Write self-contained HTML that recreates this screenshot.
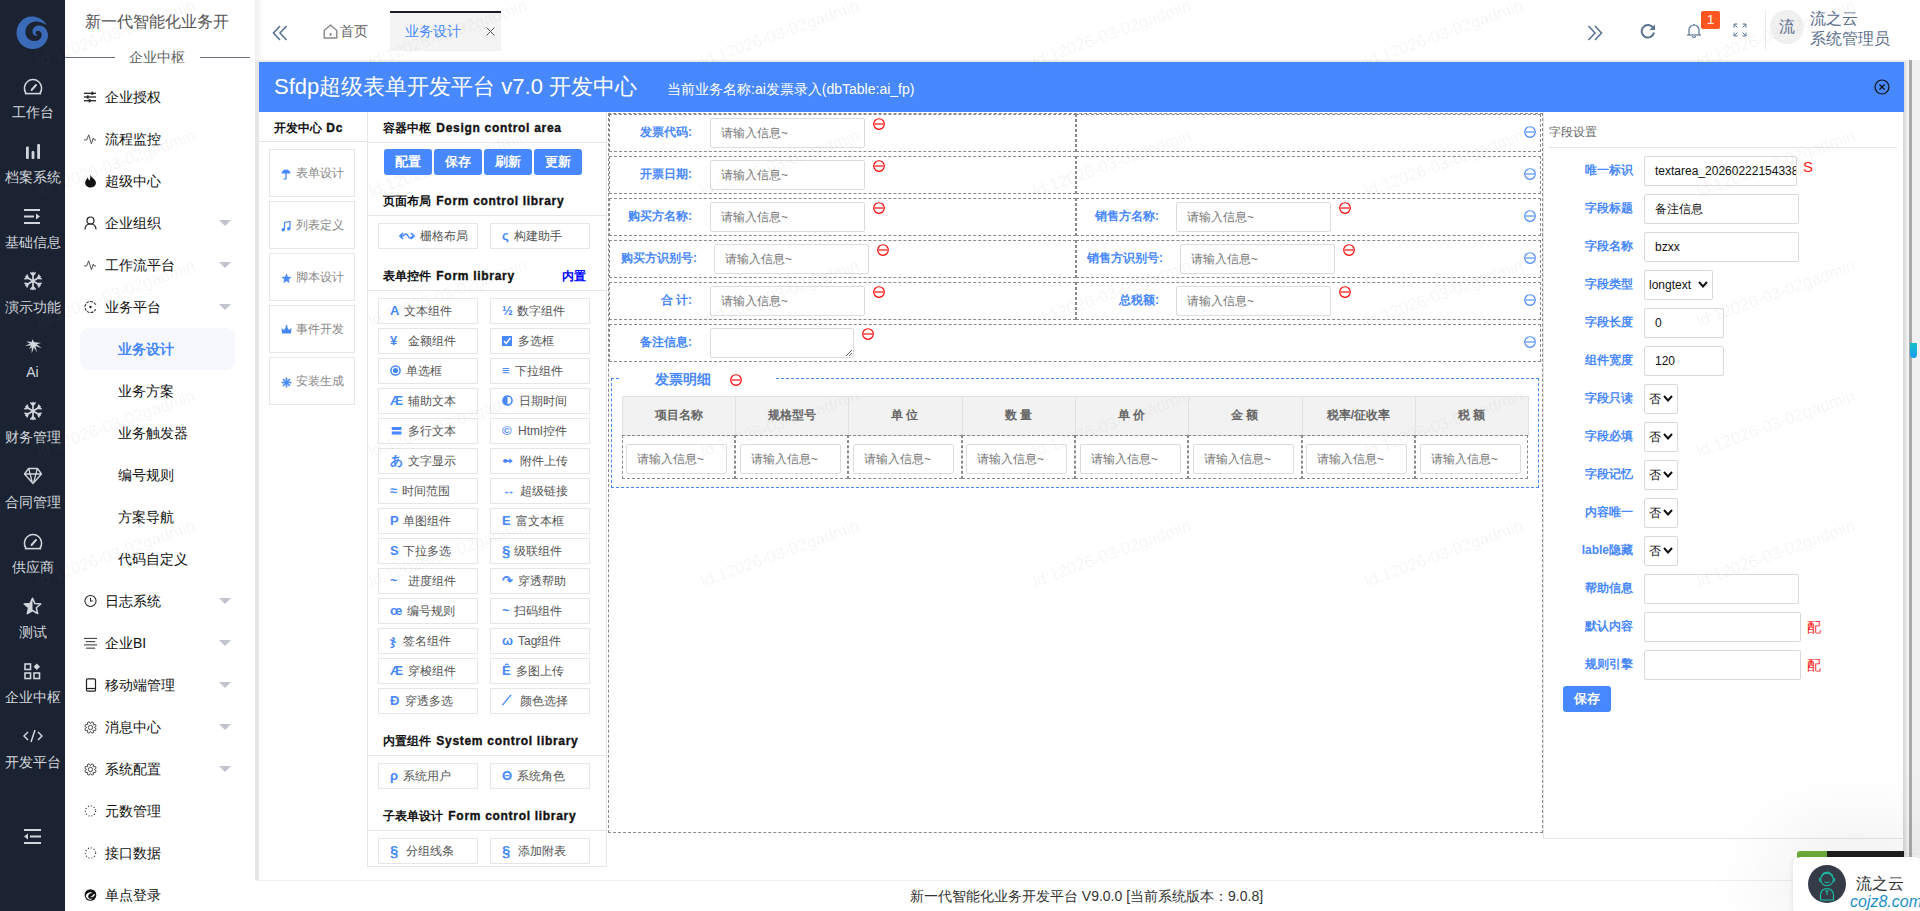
<!DOCTYPE html>
<html><head><meta charset="utf-8">
<style>
*{box-sizing:border-box;margin:0;padding:0}
html,body{width:1920px;height:911px;overflow:hidden;background:#fff;font-family:"Liberation Sans",sans-serif;color:#333;position:relative}
.abs{position:absolute}
#dark{position:absolute;left:0;top:0;width:65px;height:911px;background:#1b2332}
.di{position:absolute;left:0;width:65px;text-align:center;color:#d2d6dc;font-size:14px}
#side{position:absolute;left:65px;top:0;width:190px;height:911px;background:#fff}
.mi{position:absolute;left:0;width:190px;height:42px;line-height:42px;font-size:14px;color:#111;white-space:nowrap}
.mi .ic{position:absolute;left:19px;top:14px;width:13px;height:14px}
.mi .tx{position:absolute;left:40px}
.mi .sub{position:absolute;left:53px}
.mi .arr{position:absolute;left:154px;top:18px;width:0;height:0;border-left:6px solid transparent;border-right:6px solid transparent;border-top:6px solid #c0c4cc}
.wm{font-size:16.7px;line-height:15px;color:rgba(120,120,120,0.075);white-space:nowrap;transform:rotate(-20deg);transform-origin:0 100%}
</style></head><body>
<div id="dark">
<svg class="abs" style="left:16px;top:16px" width="33" height="34" viewBox="0 0 33 34"><path d="M31 9 C27 3 21 0.5 16 0.5 C7 0.5 0.5 8 0.5 17 C0.5 26 8 33 16.5 33 C25 33 32 27 32 19 C32 13 27 9 22.5 9.5 C18.5 10 16 13 16.5 16.5 C17 19.5 20 20.5 22 19 C20 19 19 17.5 19.8 16 C21 14 24.5 14.5 25.5 17.5 C26.5 21.5 23 25.5 18 25 C12 24.5 9 20 9.5 15 C10 9 15 5 21 5.5 C25 6 28.5 7.5 31 9Z" fill="#3a6ab8"/></svg>
<div class="di" style="top:76px;height:20px;display:flex;align-items:center;justify-content:center"><svg width="20" height="17" viewBox="0 0 20 17"><path d="M3 15.2 A8.6 8.6 0 1 1 17 15.2" fill="none" stroke="#d2d6dc" stroke-width="1.5"/><line x1="1.8" y1="15.6" x2="18.2" y2="15.6" stroke="#d2d6dc" stroke-width="1.6"/><line x1="8.6" y1="12" x2="13" y2="7" stroke="#d2d6dc" stroke-width="1.9" stroke-linecap="round"/></svg></div>
<div class="di" style="top:102px;height:20px;line-height:20px">工作台</div>
<div class="di" style="top:141px;height:20px;display:flex;align-items:center;justify-content:center"><svg width="16" height="15" viewBox="0 0 16 15"><rect x="1" y="2.5" width="2.8" height="12.5" rx="1" fill="#d2d6dc"/><rect x="6.6" y="7" width="2.8" height="8" rx="1" fill="#d2d6dc"/><rect x="12.2" y="0" width="2.8" height="15" rx="1" fill="#d2d6dc"/></svg></div>
<div class="di" style="top:167px;height:20px;line-height:20px">档案系统</div>
<div class="di" style="top:206px;height:20px;display:flex;align-items:center;justify-content:center"><svg width="17" height="15" viewBox="0 0 17 15"><rect x="0" y="0" width="16" height="2" fill="#d2d6dc"/><rect x="0" y="6.5" width="10" height="2" fill="#d2d6dc"/><path d="M12 4.5 L16 7.5 L12 10.5Z" fill="#d2d6dc"/><rect x="0" y="13" width="16" height="2" fill="#d2d6dc"/></svg></div>
<div class="di" style="top:232px;height:20px;line-height:20px">基础信息</div>
<div class="di" style="top:271px;height:20px;display:flex;align-items:center;justify-content:center"><svg width="20" height="20" viewBox="0 0 20 20"><path d="M10.00 1.70 L10.00 18.30 M2.81 5.85 L17.19 14.15 M17.19 5.85 L2.81 14.15 M10.00 15.60 L7.94 18.05 M10.00 15.60 L12.06 18.05 M5.15 12.80 L2.00 12.24 M5.15 12.80 L4.06 15.81 M5.15 7.20 L4.06 4.19 M5.15 7.20 L2.00 7.76 M10.00 4.40 L12.06 1.95 M10.00 4.40 L7.94 1.95 M14.85 7.20 L18.00 7.76 M14.85 7.20 L15.94 4.19 M14.85 12.80 L15.94 15.81 M14.85 12.80 L18.00 12.24" stroke="#d2d6dc" stroke-width="1.7" stroke-linecap="round" fill="none"/></svg></div>
<div class="di" style="top:297px;height:20px;line-height:20px">演示功能</div>
<div class="di" style="top:336px;height:20px;display:flex;align-items:center;justify-content:center"><svg width="20" height="20" viewBox="0 0 20 20"><path d="M10.05 5.97 L2.00 10.00 L10.95 9.03Z M10.91 5.95 L3.00 5.50 L10.09 9.05Z M11.83 7.06 L9.00 3.00 L9.17 7.94Z M10.61 9.10 L18.00 7.00 L10.39 5.90Z M9.79 8.71 L19.00 12.50 L11.21 6.29Z M9.30 6.60 L6.00 13.50 L11.70 8.40Z M8.73 7.18 L8.70 17.50 L12.27 7.82Z M9.10 8.04 L14.00 16.50 L11.90 6.96Z" fill="#d2d6dc"/></svg></div>
<div class="di" style="top:362px;height:20px;line-height:20px">Ai</div>
<div class="di" style="top:401px;height:20px;display:flex;align-items:center;justify-content:center"><svg width="20" height="20" viewBox="0 0 20 20"><path d="M10.00 1.70 L10.00 18.30 M2.81 5.85 L17.19 14.15 M17.19 5.85 L2.81 14.15 M10.00 15.60 L7.94 18.05 M10.00 15.60 L12.06 18.05 M5.15 12.80 L2.00 12.24 M5.15 12.80 L4.06 15.81 M5.15 7.20 L4.06 4.19 M5.15 7.20 L2.00 7.76 M10.00 4.40 L12.06 1.95 M10.00 4.40 L7.94 1.95 M14.85 7.20 L18.00 7.76 M14.85 7.20 L15.94 4.19 M14.85 12.80 L15.94 15.81 M14.85 12.80 L18.00 12.24" stroke="#d2d6dc" stroke-width="1.7" stroke-linecap="round" fill="none"/></svg></div>
<div class="di" style="top:427px;height:20px;line-height:20px">财务管理</div>
<div class="di" style="top:466px;height:20px;display:flex;align-items:center;justify-content:center"><svg width="20" height="18" viewBox="0 0 20 18"><path d="M5.5 1.5 H14.5 L18.5 7 L10 16.5 L1.5 7Z M1.5 7 H18.5 M5.8 1.8 L9.3 15.5 M14.2 1.8 L10.7 15.5" fill="none" stroke="#d2d6dc" stroke-width="1.3" stroke-linejoin="round"/></svg></div>
<div class="di" style="top:492px;height:20px;line-height:20px">合同管理</div>
<div class="di" style="top:531px;height:20px;display:flex;align-items:center;justify-content:center"><svg width="20" height="17" viewBox="0 0 20 17"><path d="M3 15.2 A8.6 8.6 0 1 1 17 15.2" fill="none" stroke="#d2d6dc" stroke-width="1.5"/><line x1="1.8" y1="15.6" x2="18.2" y2="15.6" stroke="#d2d6dc" stroke-width="1.6"/><line x1="8.6" y1="12" x2="13" y2="7" stroke="#d2d6dc" stroke-width="1.9" stroke-linecap="round"/></svg></div>
<div class="di" style="top:557px;height:20px;line-height:20px">供应商</div>
<div class="di" style="top:596px;height:20px;display:flex;align-items:center;justify-content:center"><svg width="19" height="18" viewBox="0 0 19 18"><path d="M9.5 1.2 L11.9 6.6 L17.8 7 L13.3 10.8 L14.7 16.6 L9.5 13.5 L4.3 16.6 L5.7 10.8 L1.2 7 L7.1 6.6Z" fill="none" stroke="#d2d6dc" stroke-width="1.5" stroke-linejoin="round"/><path d="M9.5 1.2 L9.5 13.5 L4.3 16.6 L5.7 10.8 L1.2 7 L7.1 6.6Z" fill="#d2d6dc"/></svg></div>
<div class="di" style="top:622px;height:20px;line-height:20px">测试</div>
<div class="di" style="top:661px;height:20px;display:flex;align-items:center;justify-content:center"><svg width="17" height="17" viewBox="0 0 17 17"><g fill="none" stroke="#d2d6dc" stroke-width="1.6"><rect x="1" y="1" width="5.5" height="5.5"/><rect x="1" y="10" width="5.5" height="5.5"/><rect x="10" y="10" width="5.5" height="5.5"/></g><path d="M12.8 0.5 L16 3.8 L12.8 7 L9.6 3.8Z" fill="#d2d6dc"/></svg></div>
<div class="di" style="top:687px;height:20px;line-height:20px">企业中枢</div>
<div class="di" style="top:726px;height:20px;display:flex;align-items:center;justify-content:center"><svg width="20" height="14" viewBox="0 0 20 14"><g fill="none" stroke="#d2d6dc" stroke-width="1.5"><path d="M5 3 L1 7 L5 11"/><path d="M15 3 L19 7 L15 11"/><path d="M12 1 L8 13"/></g></svg></div>
<div class="di" style="top:752px;height:20px;line-height:20px">开发平台</div>
<svg class="abs" style="left:24px;top:829px" width="17" height="15" viewBox="0 0 17 15"><rect x="0" y="0" width="17" height="2" fill="#d2d6dc"/><rect x="6" y="6.5" width="11" height="2" fill="#d2d6dc"/><path d="M4 4.5 L0 7.5 L4 10.5Z" fill="#d2d6dc"/><rect x="0" y="13" width="17" height="2" fill="#d2d6dc"/></svg>
</div><div id="side">
<div class="abs" style="left:20px;top:11px;font-size:16px;line-height:21px;color:#555;white-space:nowrap">新一代智能化业务开</div>
<div class="abs" style="left:0;top:57px;width:50px;height:1px;background:#6b6f7a"></div>
<div class="abs" style="left:135px;top:57px;width:50px;height:1px;background:#6b6f7a"></div>
<div class="abs" style="left:64px;top:48px;font-size:14px;line-height:18px;color:#606266">企业中枢</div>
<div class="mi" style="top:76px"><span class="ic" style="display:flex;align-items:center;justify-content:center"><svg width="14" height="12" viewBox="0 0 14 12"><g stroke="#222" stroke-width="1.4"><line x1="0" y1="2" x2="13" y2="2"/><line x1="0" y1="6" x2="13" y2="6"/><line x1="0" y1="10" x2="13" y2="10"/></g><rect x="8" y="0.3" width="2" height="3.4" fill="#222"/><rect x="3" y="4.3" width="2" height="3.4" fill="#222"/><rect x="5" y="8.3" width="2" height="3.4" fill="#222"/></svg></span><span class="tx">企业授权</span></div>
<div class="mi" style="top:118px"><span class="ic" style="display:flex;align-items:center;justify-content:center"><svg width="14" height="12" viewBox="0 0 14 12"><path d="M0 7 H3 L5 1.5 L8 11 L10 5 L11 7 H13" fill="none" stroke="#333" stroke-width="0.9"/></svg></span><span class="tx">流程监控</span></div>
<div class="mi" style="top:160px"><span class="ic" style="display:flex;align-items:center;justify-content:center"><svg width="13" height="14" viewBox="0 0 13 14"><path d="M6 0.5 C7 3 10 4.5 11.5 7 C13 10.5 10.5 13.5 6.5 13.5 C3 13.5 1 11 1.2 8.5 C1.4 6.5 3 5 3.5 3.5 C4.5 5 4.5 6 5.5 6.5 C6.5 4.5 6.5 2.5 6 0.5Z" fill="#111"/></svg></span><span class="tx">超级中心</span></div>
<div class="mi" style="top:202px"><span class="ic" style="display:flex;align-items:center;justify-content:center"><svg width="13" height="14" viewBox="0 0 13 14"><circle cx="6.5" cy="4.5" r="3.5" fill="none" stroke="#222" stroke-width="1.2"/><path d="M1 13.5 C1 9.5 3.5 8 6.5 8 C9.5 8 12 9.5 12 13.5" fill="none" stroke="#222" stroke-width="1.2"/></svg></span><span class="tx">企业组织</span><span class="arr"></span></div>
<div class="mi" style="top:244px"><span class="ic" style="display:flex;align-items:center;justify-content:center"><svg width="14" height="12" viewBox="0 0 14 12"><path d="M0 7 H3 L5 1.5 L8 11 L10 5 L11 7 H13" fill="none" stroke="#333" stroke-width="0.9"/></svg></span><span class="tx">工作流平台</span><span class="arr"></span></div>
<div class="mi" style="top:286px"><span class="ic" style="display:flex;align-items:center;justify-content:center"><svg width="14" height="14" viewBox="0 0 14 14"><path d="M12.5 4.5 A6 6 0 1 0 12.5 9.5" fill="none" stroke="#222" stroke-width="1.1" stroke-dasharray="3 1.2"/><circle cx="7" cy="7" r="1.3" fill="#222"/></svg></span><span class="tx">业务平台</span><span class="arr"></span></div>
<div class="abs" style="left:15px;top:328px;width:155px;height:42px;border-radius:9px;background:#f6f8fe"></div>
<div class="mi" style="top:328px"><span class="sub" style="color:#4888fe;font-weight:bold">业务设计</span></div>
<div class="mi" style="top:370px"><span class="sub">业务方案</span></div>
<div class="mi" style="top:412px"><span class="sub">业务触发器</span></div>
<div class="mi" style="top:454px"><span class="sub">编号规则</span></div>
<div class="mi" style="top:496px"><span class="sub">方案导航</span></div>
<div class="mi" style="top:538px"><span class="sub">代码自定义</span></div>
<div class="mi" style="top:580px"><span class="ic" style="display:flex;align-items:center;justify-content:center"><svg width="14" height="14" viewBox="0 0 14 14"><circle cx="7" cy="7" r="6" fill="none" stroke="#222" stroke-width="1.1"/><path d="M7 3.5 V7 H9.5" fill="none" stroke="#222" stroke-width="1.1"/></svg></span><span class="tx">日志系统</span><span class="arr"></span></div>
<div class="mi" style="top:622px"><span class="ic" style="display:flex;align-items:center;justify-content:center"><svg width="14" height="13" viewBox="0 0 14 13"><g stroke="#222" stroke-width="1"><line x1="0" y1="1" x2="14" y2="1"/><line x1="2" y1="4.5" x2="12" y2="4.5"/><line x1="0" y1="8" x2="14" y2="8"/><line x1="2" y1="11.5" x2="12" y2="11.5"/></g></svg></span><span class="tx">企业BI</span><span class="arr"></span></div>
<div class="mi" style="top:664px"><span class="ic" style="display:flex;align-items:center;justify-content:center"><svg width="12" height="14" viewBox="0 0 12 14"><rect x="1.5" y="0.8" width="9" height="12.4" rx="1" fill="none" stroke="#222" stroke-width="1.2"/><line x1="1.5" y1="10.5" x2="10.5" y2="10.5" stroke="#222" stroke-width="1.2"/></svg></span><span class="tx">移动端管理</span><span class="arr"></span></div>
<div class="mi" style="top:706px"><span class="ic" style="display:flex;align-items:center;justify-content:center"><svg width="15" height="15" viewBox="0 0 15 15"><path d="M12.10 7.65 L14.03 8.98 L13.17 11.07 L10.86 10.64 L10.64 10.86 L11.07 13.17 L8.98 14.03 L7.65 12.10 L7.35 12.10 L6.02 14.03 L3.93 13.17 L4.36 10.86 L4.14 10.64 L1.83 11.07 L0.97 8.98 L2.90 7.65 L2.90 7.35 L0.97 6.02 L1.83 3.93 L4.14 4.36 L4.36 4.14 L3.93 1.83 L6.02 0.97 L7.35 2.90 L7.65 2.90 L8.98 0.97 L11.07 1.83 L10.64 4.14 L10.86 4.36 L13.17 3.93 L14.03 6.02 L12.10 7.35Z" fill="none" stroke="#333" stroke-width="1" stroke-linejoin="round"/><circle cx="7.5" cy="7.5" r="2.5" fill="none" stroke="#333" stroke-width="1"/></svg></span><span class="tx">消息中心</span><span class="arr"></span></div>
<div class="mi" style="top:748px"><span class="ic" style="display:flex;align-items:center;justify-content:center"><svg width="15" height="15" viewBox="0 0 15 15"><path d="M12.10 7.65 L14.03 8.98 L13.17 11.07 L10.86 10.64 L10.64 10.86 L11.07 13.17 L8.98 14.03 L7.65 12.10 L7.35 12.10 L6.02 14.03 L3.93 13.17 L4.36 10.86 L4.14 10.64 L1.83 11.07 L0.97 8.98 L2.90 7.65 L2.90 7.35 L0.97 6.02 L1.83 3.93 L4.14 4.36 L4.36 4.14 L3.93 1.83 L6.02 0.97 L7.35 2.90 L7.65 2.90 L8.98 0.97 L11.07 1.83 L10.64 4.14 L10.86 4.36 L13.17 3.93 L14.03 6.02 L12.10 7.35Z" fill="none" stroke="#333" stroke-width="1" stroke-linejoin="round"/><circle cx="7.5" cy="7.5" r="2.5" fill="none" stroke="#333" stroke-width="1"/></svg></span><span class="tx">系统配置</span><span class="arr"></span></div>
<div class="mi" style="top:790px"><span class="ic" style="display:flex;align-items:center;justify-content:center"><svg width="14" height="14" viewBox="0 0 14 14"><circle cx="7" cy="7" r="5.5" fill="none" stroke="#222" stroke-width="1.3" stroke-dasharray="1 2.2"/></svg></span><span class="tx">元数管理</span></div>
<div class="mi" style="top:832px"><span class="ic" style="display:flex;align-items:center;justify-content:center"><svg width="14" height="14" viewBox="0 0 14 14"><circle cx="7" cy="7" r="5.5" fill="none" stroke="#222" stroke-width="1.3" stroke-dasharray="1 2.2"/></svg></span><span class="tx">接口数据</span></div>
<div class="mi" style="top:874px"><span class="ic" style="display:flex;align-items:center;justify-content:center"><svg width="14" height="14" viewBox="0 0 14 14"><circle cx="7" cy="7" r="6.3" fill="#111"/><path d="M2 8 C3 4 7 3 10 5 C8 4.5 5 5.5 4.5 8 C4 10.5 7 12 10 10.5 C8 13 3 12.5 2 8Z" fill="#fff"/><path d="M12 6 C11 9.5 8 10 6 9 C8 9 9.5 8 9.5 6.5Z" fill="#fff"/></svg></span><span class="tx">单点登录</span></div>
</div><div class="abs" style="left:255px;top:0;width:1665px;height:60px;background:#fff"></div>
<div class="abs" style="left:255px;top:0;width:9px;height:60px;background:linear-gradient(90deg,#efefef,#fff)"></div>
<svg class="abs" style="left:272px;top:25px" width="16" height="16" viewBox="0 0 16 16"><path d="M8 1 L1.5 8 L8 15 M14.5 1 L8 8 L14.5 15" fill="none" stroke="#5b7494" stroke-width="1.6"/></svg>
<svg class="abs" style="left:323px;top:24px" width="15" height="15" viewBox="0 0 15 15"><path d="M1.2 6.5 L7.5 1 L13.8 6.5 V14 H1.2Z" fill="none" stroke="#888" stroke-width="1.4" stroke-linejoin="round"/><rect x="6.8" y="9" width="1.6" height="3" fill="#888"/></svg>
<div class="abs" style="left:340px;top:22px;font-size:14px;line-height:18px;color:#666">首页</div>
<div class="abs" style="left:390px;top:11px;width:111px;height:40px;background:#f4f4f4;border-top:2px solid #1b1b2a"></div>
<div class="abs" style="left:405px;top:22px;font-size:14px;line-height:18px;color:#4888fe">业务设计</div>
<svg class="abs" style="left:486px;top:27px" width="9" height="9" viewBox="0 0 9 9"><path d="M0.5 0.5 L8.5 8.5 M8.5 0.5 L0.5 8.5" stroke="#555" stroke-width="1"/></svg>
<svg class="abs" style="left:1587px;top:25px" width="16" height="16" viewBox="0 0 16 16"><path d="M1.5 1 L8 8 L1.5 15 M8 1 L14.5 8 L8 15" fill="none" stroke="#5b7494" stroke-width="1.6"/></svg>
<svg class="abs" style="left:1640px;top:23px" width="17" height="16" viewBox="0 0 17 16"><path d="M13.2 5 A6.2 6.2 0 1 0 14 9.5" fill="none" stroke="#5b7494" stroke-width="2"/><path d="M15 1.5 V7 H9.5Z" fill="#5b7494"/></svg>
<svg class="abs" style="left:1686px;top:23px" width="16" height="16" viewBox="0 0 16 16"><path d="M3 12 V7 A5 5 0 0 1 13 7 V12" fill="none" stroke="#5b7494" stroke-width="1.2"/><line x1="1" y1="12" x2="15" y2="12" stroke="#5b7494" stroke-width="1.2"/><path d="M6.5 13 A1.5 1.5 0 0 0 9.5 13" fill="none" stroke="#5b7494" stroke-width="1.2"/><circle cx="8" cy="1.8" r="0.8" fill="#5b7494"/></svg>
<div class="abs" style="left:1701px;top:11px;width:19px;height:18px;background:#fe5621;border-radius:2px;color:#fff;font-size:13px;line-height:18px;text-align:center">1</div>
<svg class="abs" style="left:1733px;top:23px" width="14" height="14" viewBox="0 0 14 14"><g fill="none" stroke="#5b7494" stroke-width="1"><path d="M1 4.5 V1 H4.5 M1 1 L4.5 4.5"/><path d="M9.5 1 H13 V4.5 M13 1 L9.5 4.5"/><path d="M1 9.5 V13 H4.5 M1 13 L4.5 9.5"/><path d="M13 9.5 V13 H9.5 M13 13 L9.5 9.5"/></g></svg>
<div class="abs" style="left:1765px;top:10px;width:1px;height:40px;background:#e6e9ee"></div>
<div class="abs" style="left:1770px;top:10px;width:34px;height:34px;border-radius:50%;background:#f0f0f0;color:#5b6e8c;font-size:16px;line-height:34px;text-align:center">流</div>
<div class="abs" style="left:1810px;top:9px;font-size:16px;line-height:20px;color:#5b6e8c;white-space:nowrap">流之云<br>系统管理员</div><div class="abs" style="left:255px;top:60px;width:4px;height:820px;background:#e6e6e6"></div>
<div class="abs" style="left:255px;top:60px;width:1652px;height:2px;background:#ececec"></div>
<div class="abs" style="left:259px;top:62px;width:1645px;height:818px;background:#fff;border-radius:0 0 4px 4px"></div>
<div class="abs" style="left:1903px;top:62px;width:4px;height:818px;background:linear-gradient(90deg,#d5d5d5,#ececec)"></div>
<div class="abs" style="left:1907px;top:60px;width:2px;height:851px;background:#f2f2f2"></div>
<div class="abs" style="left:1909px;top:60px;width:3px;height:851px;background:#a9a9a9"></div>
<div class="abs" style="left:1912px;top:60px;width:8px;height:851px;background:#f1f1f1"></div>
<div class="abs" style="left:1910px;top:343px;width:7px;height:15px;background:linear-gradient(#14c0c8,#1a9cf5);border-radius:0 0 4px 4px"></div>
<div class="abs" style="left:259px;top:62px;width:1645px;height:50px;background:#4888fe"></div>
<div class="abs" style="left:274px;top:73px;font-size:22px;line-height:28px;color:#fff;white-space:nowrap">Sfdp超级表单开发平台 v7.0 开发中心</div>
<div class="abs" style="left:667px;top:80px;font-size:14px;line-height:18px;color:#fff;white-space:nowrap">当前业务名称:ai发票录入(dbTable:ai_fp)</div>
<svg class="abs" style="left:1874px;top:79px" width="16" height="16" viewBox="0 0 16 16"><circle cx="8" cy="8" r="7" fill="none" stroke="#111" stroke-width="1.2"/><path d="M5.5 5.5 L10.5 10.5 M10.5 5.5 L5.5 10.5" stroke="#111" stroke-width="1.3"/></svg>
<div class="abs" style="left:255px;top:880px;width:1652px;height:31px;background:#fff;border-top:1px solid #f0f0f0"></div>
<div class="abs" style="left:255px;top:896px;width:1665px;text-align:center;font-size:14px;line-height:18px;color:#333;margin-top:-9px;padding-right:2px;white-space:nowrap"><span>新一代智能化业务开发平台 V9.0.0 [当前系统版本：9.0.8]</span></div><div class="abs" style="left:367px;top:112px;width:1px;height:755px;background:#e6e6e6"></div>
<div class="abs" style="left:259px;top:141px;width:108px;height:1px;background:#e6e6e6"></div>
<div class="abs" style="left:274px;top:119px;font-size:12px;line-height:18px;font-weight:bold;color:#111;white-space:nowrap">开发中心 <span style="letter-spacing:0.7px;margin-left:1px;-webkit-text-stroke:0.35px #111">Dc</span></div>
<div class="abs" style="left:269px;top:149px;width:86px;height:48px;border:1px solid #e6e6e6"></div>
<div class="abs" style="left:280px;top:168px;width:12px;height:12px;display:flex;align-items:center;justify-content:center"><svg width="10" height="11" viewBox="0 0 10 11"><path d="M0.5 4.5 A4.5 4 0 0 1 9.5 4.5Z" fill="#4888fe"/><path d="M5 4 V9.5 A1.2 1.2 0 0 1 2.8 9.5" fill="none" stroke="#4888fe" stroke-width="1.3"/></svg></div>
<div class="abs" style="left:296px;top:165px;font-size:12px;line-height:17px;color:#888;white-space:nowrap">表单设计</div>
<div class="abs" style="left:269px;top:201px;width:86px;height:48px;border:1px solid #e6e6e6"></div>
<div class="abs" style="left:280px;top:220px;width:12px;height:12px;display:flex;align-items:center;justify-content:center"><svg width="10" height="11" viewBox="0 0 10 11"><path d="M3.5 8.5 V1.5 L9 0.5 V7.5" fill="none" stroke="#4888fe" stroke-width="1.2"/><circle cx="2.2" cy="8.7" r="1.7" fill="#4888fe"/><circle cx="7.7" cy="7.7" r="1.7" fill="#4888fe"/></svg></div>
<div class="abs" style="left:296px;top:217px;font-size:12px;line-height:17px;color:#888;white-space:nowrap">列表定义</div>
<div class="abs" style="left:269px;top:253px;width:86px;height:48px;border:1px solid #e6e6e6"></div>
<div class="abs" style="left:280px;top:272px;width:12px;height:12px;display:flex;align-items:center;justify-content:center"><svg width="11" height="11" viewBox="0 0 11 11"><path d="M5.5 0.3 L6.9 3.8 L10.6 4 L7.7 6.4 L8.7 10.2 L5.5 8.1 L2.3 10.2 L3.3 6.4 L0.4 4 L4.1 3.8Z" fill="#4888fe"/></svg></div>
<div class="abs" style="left:296px;top:269px;font-size:12px;line-height:17px;color:#888;white-space:nowrap">脚本设计</div>
<div class="abs" style="left:269px;top:305px;width:86px;height:48px;border:1px solid #e6e6e6"></div>
<div class="abs" style="left:280px;top:324px;width:12px;height:12px;display:flex;align-items:center;justify-content:center"><svg width="11" height="10" viewBox="0 0 11 10"><path d="M0.5 3 L3 5 L5.5 1 L8 5 L10.5 3 L10 8.5 H1Z" fill="#4888fe"/><circle cx="5.5" cy="1" r="1" fill="#4888fe"/></svg></div>
<div class="abs" style="left:296px;top:321px;font-size:12px;line-height:17px;color:#888;white-space:nowrap">事件开发</div>
<div class="abs" style="left:269px;top:357px;width:86px;height:48px;border:1px solid #e6e6e6"></div>
<div class="abs" style="left:280px;top:376px;width:12px;height:12px;display:flex;align-items:center;justify-content:center"><svg width="11" height="11" viewBox="0 0 11 11"><g stroke="#4888fe" stroke-width="1.6"><line x1="5.5" y1="0.5" x2="5.5" y2="10.5"/><line x1="0.5" y1="5.5" x2="10.5" y2="5.5"/><line x1="2" y1="2" x2="9" y2="9"/><line x1="9" y1="2" x2="2" y2="9"/></g></svg></div>
<div class="abs" style="left:296px;top:373px;font-size:12px;line-height:17px;color:#888;white-space:nowrap">安装生成</div><div class="abs" style="left:606px;top:112px;width:1px;height:755px;background:#e6e6e6"></div>
<div class="abs" style="left:367px;top:866px;width:240px;height:1px;background:#e6e6e6"></div>
<div class="abs" style="left:383px;top:119px;font-size:12px;line-height:18px;font-weight:bold;color:#111;white-space:nowrap">容器中枢 <span style="letter-spacing:0.7px;margin-left:2px;-webkit-text-stroke:0.35px #111">Design control area</span></div>
<div class="abs" style="left:368px;top:142px;width:238px;height:1px;background:#e6e6e6"></div>
<div class="abs" style="left:384px;top:149px;width:48px;height:26px;background:#4888fe;border-radius:3px;color:#fff;font-size:13px;line-height:26px;text-align:center;font-weight:bold">配置</div>
<div class="abs" style="left:434px;top:149px;width:48px;height:26px;background:#4888fe;border-radius:3px;color:#fff;font-size:13px;line-height:26px;text-align:center;font-weight:bold">保存</div>
<div class="abs" style="left:484px;top:149px;width:48px;height:26px;background:#4888fe;border-radius:3px;color:#fff;font-size:13px;line-height:26px;text-align:center;font-weight:bold">刷新</div>
<div class="abs" style="left:534px;top:149px;width:48px;height:26px;background:#4888fe;border-radius:3px;color:#fff;font-size:13px;line-height:26px;text-align:center;font-weight:bold">更新</div>
<div class="abs" style="left:383px;top:192px;font-size:12px;line-height:18px;font-weight:bold;color:#111;white-space:nowrap">页面布局 <span style="letter-spacing:0.7px;margin-left:2px;-webkit-text-stroke:0.35px #111">Form control library</span></div>
<div class="abs" style="left:368px;top:215px;width:238px;height:1px;background:#e6e6e6"></div>
<div class="abs" style="left:383px;top:267px;font-size:12px;line-height:18px;font-weight:bold;color:#111;white-space:nowrap">表单控件 <span style="letter-spacing:0.7px;margin-left:2px;-webkit-text-stroke:0.35px #111">Form library</span></div>
<div class="abs" style="left:368px;top:290px;width:238px;height:1px;background:#e6e6e6"></div>
<div class="abs" style="left:562px;top:266.5px;font-size:12px;line-height:18px;font-weight:bold;color:#0000ff">内置</div>
<div class="abs" style="left:383px;top:732px;font-size:12px;line-height:18px;font-weight:bold;color:#111;white-space:nowrap">内置组件 <span style="letter-spacing:0.7px;margin-left:2px;-webkit-text-stroke:0.35px #111">System control library</span></div>
<div class="abs" style="left:368px;top:755px;width:238px;height:1px;background:#e6e6e6"></div>
<div class="abs" style="left:383px;top:807px;font-size:12px;line-height:18px;font-weight:bold;color:#111;white-space:nowrap">子表单设计 <span style="letter-spacing:0.7px;margin-left:2px;-webkit-text-stroke:0.35px #111">Form control library</span></div>
<div class="abs" style="left:368px;top:830px;width:238px;height:1px;background:#e6e6e6"></div>
<div class="abs" style="left:378px;top:223px;width:100px;height:26px;border:1px solid #e6e6e6"></div>
<div class="abs" style="left:399px;top:227px;height:18px;line-height:18px;font-size:13px;font-weight:bold;color:#4888fe;white-space:nowrap"><svg width="16" height="8" viewBox="0 0 16 8"><path d="M4 1 L1 4 L4 7 M1 4 H3 C5 4 5 2 7 2 C9 2 9 6 11 6 C13 6 13 4 15 4 M12 1 L15 4 L12 7" fill="none" stroke="#4888fe" stroke-width="1.6"/></svg></div>
<div class="abs" style="left:420px;top:228px;font-size:12px;line-height:16px;color:#555;white-space:nowrap">栅格布局</div>
<div class="abs" style="left:490px;top:223px;width:100px;height:26px;border:1px solid #e6e6e6"></div>
<div class="abs" style="left:502px;top:227px;height:18px;line-height:18px;font-size:13px;font-weight:bold;color:#4888fe;white-space:nowrap">ς</div>
<div class="abs" style="left:514px;top:228px;font-size:12px;line-height:16px;color:#555;white-space:nowrap">构建助手</div>
<div class="abs" style="left:378px;top:298px;width:100px;height:26px;border:1px solid #e6e6e6"></div>
<div class="abs" style="left:390px;top:302px;height:18px;line-height:18px;font-size:13px;font-weight:bold;color:#4888fe;white-space:nowrap">A</div>
<div class="abs" style="left:404px;top:303px;font-size:12px;line-height:16px;color:#555;white-space:nowrap">文本组件</div>
<div class="abs" style="left:490px;top:298px;width:100px;height:26px;border:1px solid #e6e6e6"></div>
<div class="abs" style="left:502px;top:302px;height:18px;line-height:18px;font-size:13px;font-weight:bold;color:#4888fe;white-space:nowrap">½</div>
<div class="abs" style="left:517px;top:303px;font-size:12px;line-height:16px;color:#555;white-space:nowrap">数字组件</div>
<div class="abs" style="left:378px;top:328px;width:100px;height:26px;border:1px solid #e6e6e6"></div>
<div class="abs" style="left:390px;top:332px;height:18px;line-height:18px;font-size:13px;font-weight:bold;color:#4888fe;white-space:nowrap">¥</div>
<div class="abs" style="left:408px;top:333px;font-size:12px;line-height:16px;color:#555;white-space:nowrap">金额组件</div>
<div class="abs" style="left:490px;top:328px;width:100px;height:26px;border:1px solid #e6e6e6"></div>
<div class="abs" style="left:502px;top:332px;height:18px;line-height:18px;font-size:13px;font-weight:bold;color:#4888fe;white-space:nowrap"><svg width="10" height="10" viewBox="0 0 10 10" style="vertical-align:-1px"><rect x="0" y="0" width="10" height="10" fill="#4888fe"/><path d="M2 5 L4.3 7.5 L8.3 2" fill="none" stroke="#fff" stroke-width="1.5"/></svg></div>
<div class="abs" style="left:518px;top:333px;font-size:12px;line-height:16px;color:#555;white-space:nowrap">多选框</div>
<div class="abs" style="left:378px;top:358px;width:100px;height:26px;border:1px solid #e6e6e6"></div>
<div class="abs" style="left:390px;top:362px;height:18px;line-height:18px;font-size:13px;font-weight:bold;color:#4888fe;white-space:nowrap"><svg width="11" height="11" viewBox="0 0 11 11" style="vertical-align:-1px"><circle cx="5.5" cy="5.5" r="4.6" fill="none" stroke="#4888fe" stroke-width="1.5"/><circle cx="5.5" cy="5.5" r="2.6" fill="#4888fe"/></svg></div>
<div class="abs" style="left:406px;top:363px;font-size:12px;line-height:16px;color:#555;white-space:nowrap">单选框</div>
<div class="abs" style="left:490px;top:358px;width:100px;height:26px;border:1px solid #e6e6e6"></div>
<div class="abs" style="left:502px;top:362px;height:18px;line-height:18px;font-size:13px;font-weight:bold;color:#4888fe;white-space:nowrap">≡</div>
<div class="abs" style="left:515px;top:363px;font-size:12px;line-height:16px;color:#555;white-space:nowrap">下拉组件</div>
<div class="abs" style="left:378px;top:388px;width:100px;height:26px;border:1px solid #e6e6e6"></div>
<div class="abs" style="left:390px;top:392px;height:18px;line-height:18px;font-size:13px;font-weight:bold;color:#4888fe;white-space:nowrap">Æ</div>
<div class="abs" style="left:408px;top:393px;font-size:12px;line-height:16px;color:#555;white-space:nowrap">辅助文本</div>
<div class="abs" style="left:490px;top:388px;width:100px;height:26px;border:1px solid #e6e6e6"></div>
<div class="abs" style="left:502px;top:392px;height:18px;line-height:18px;font-size:13px;font-weight:bold;color:#4888fe;white-space:nowrap"><svg width="11" height="11" viewBox="0 0 11 11" style="vertical-align:-1px"><circle cx="5.5" cy="5.5" r="4.5" fill="none" stroke="#4888fe" stroke-width="1.6"/><path d="M5.5 1 A4.5 4.5 0 0 0 5.5 10Z" fill="#4888fe"/></svg></div>
<div class="abs" style="left:519px;top:393px;font-size:12px;line-height:16px;color:#555;white-space:nowrap">日期时间</div>
<div class="abs" style="left:378px;top:418px;width:100px;height:26px;border:1px solid #e6e6e6"></div>
<div class="abs" style="left:390px;top:422px;height:18px;line-height:18px;font-size:13px;font-weight:bold;color:#4888fe;white-space:nowrap">〓</div>
<div class="abs" style="left:408px;top:423px;font-size:12px;line-height:16px;color:#555;white-space:nowrap">多行文本</div>
<div class="abs" style="left:490px;top:418px;width:100px;height:26px;border:1px solid #e6e6e6"></div>
<div class="abs" style="left:502px;top:422px;height:18px;line-height:18px;font-size:13px;font-weight:bold;color:#4888fe;white-space:nowrap">©</div>
<div class="abs" style="left:518px;top:423px;font-size:12px;line-height:16px;color:#555;white-space:nowrap">Html控件</div>
<div class="abs" style="left:378px;top:448px;width:100px;height:26px;border:1px solid #e6e6e6"></div>
<div class="abs" style="left:390px;top:452px;height:18px;line-height:18px;font-size:13px;font-weight:bold;color:#4888fe;white-space:nowrap">あ</div>
<div class="abs" style="left:408px;top:453px;font-size:12px;line-height:16px;color:#555;white-space:nowrap">文字显示</div>
<div class="abs" style="left:490px;top:448px;width:100px;height:26px;border:1px solid #e6e6e6"></div>
<div class="abs" style="left:502px;top:452px;height:18px;line-height:18px;font-size:13px;font-weight:bold;color:#4888fe;white-space:nowrap">➻</div>
<div class="abs" style="left:520px;top:453px;font-size:12px;line-height:16px;color:#555;white-space:nowrap">附件上传</div>
<div class="abs" style="left:378px;top:478px;width:100px;height:26px;border:1px solid #e6e6e6"></div>
<div class="abs" style="left:390px;top:482px;height:18px;line-height:18px;font-size:13px;font-weight:bold;color:#4888fe;white-space:nowrap">≈</div>
<div class="abs" style="left:402px;top:483px;font-size:12px;line-height:16px;color:#555;white-space:nowrap">时间范围</div>
<div class="abs" style="left:490px;top:478px;width:100px;height:26px;border:1px solid #e6e6e6"></div>
<div class="abs" style="left:502px;top:482px;height:18px;line-height:18px;font-size:13px;font-weight:bold;color:#4888fe;white-space:nowrap">↔</div>
<div class="abs" style="left:520px;top:483px;font-size:12px;line-height:16px;color:#555;white-space:nowrap">超级链接</div>
<div class="abs" style="left:378px;top:508px;width:100px;height:26px;border:1px solid #e6e6e6"></div>
<div class="abs" style="left:390px;top:512px;height:18px;line-height:18px;font-size:13px;font-weight:bold;color:#4888fe;white-space:nowrap">P</div>
<div class="abs" style="left:403px;top:513px;font-size:12px;line-height:16px;color:#555;white-space:nowrap">单图组件</div>
<div class="abs" style="left:490px;top:508px;width:100px;height:26px;border:1px solid #e6e6e6"></div>
<div class="abs" style="left:502px;top:512px;height:18px;line-height:18px;font-size:13px;font-weight:bold;color:#4888fe;white-space:nowrap">E</div>
<div class="abs" style="left:516px;top:513px;font-size:12px;line-height:16px;color:#555;white-space:nowrap">富文本框</div>
<div class="abs" style="left:378px;top:538px;width:100px;height:26px;border:1px solid #e6e6e6"></div>
<div class="abs" style="left:390px;top:542px;height:18px;line-height:18px;font-size:13px;font-weight:bold;color:#4888fe;white-space:nowrap">S</div>
<div class="abs" style="left:403px;top:543px;font-size:12px;line-height:16px;color:#555;white-space:nowrap">下拉多选</div>
<div class="abs" style="left:490px;top:538px;width:100px;height:26px;border:1px solid #e6e6e6"></div>
<div class="abs" style="left:502px;top:542px;height:18px;line-height:18px;font-size:13px;font-weight:bold;color:#4888fe;white-space:nowrap"><span style="font-size:15px;font-weight:bold">§</span></div>
<div class="abs" style="left:514px;top:543px;font-size:12px;line-height:16px;color:#555;white-space:nowrap">级联组件</div>
<div class="abs" style="left:378px;top:568px;width:100px;height:26px;border:1px solid #e6e6e6"></div>
<div class="abs" style="left:390px;top:572px;height:18px;line-height:18px;font-size:13px;font-weight:bold;color:#4888fe;white-space:nowrap">~</div>
<div class="abs" style="left:408px;top:573px;font-size:12px;line-height:16px;color:#555;white-space:nowrap">进度组件</div>
<div class="abs" style="left:490px;top:568px;width:100px;height:26px;border:1px solid #e6e6e6"></div>
<div class="abs" style="left:502px;top:572px;height:18px;line-height:18px;font-size:13px;font-weight:bold;color:#4888fe;white-space:nowrap">↷</div>
<div class="abs" style="left:518px;top:573px;font-size:12px;line-height:16px;color:#555;white-space:nowrap">穿透帮助</div>
<div class="abs" style="left:378px;top:598px;width:100px;height:26px;border:1px solid #e6e6e6"></div>
<div class="abs" style="left:390px;top:602px;height:18px;line-height:18px;font-size:13px;font-weight:bold;color:#4888fe;white-space:nowrap">œ</div>
<div class="abs" style="left:407px;top:603px;font-size:12px;line-height:16px;color:#555;white-space:nowrap">编号规则</div>
<div class="abs" style="left:490px;top:598px;width:100px;height:26px;border:1px solid #e6e6e6"></div>
<div class="abs" style="left:502px;top:602px;height:18px;line-height:18px;font-size:13px;font-weight:bold;color:#4888fe;white-space:nowrap">~</div>
<div class="abs" style="left:514px;top:603px;font-size:12px;line-height:16px;color:#555;white-space:nowrap">扫码组件</div>
<div class="abs" style="left:378px;top:628px;width:100px;height:26px;border:1px solid #e6e6e6"></div>
<div class="abs" style="left:390px;top:632px;height:18px;line-height:18px;font-size:13px;font-weight:bold;color:#4888fe;white-space:nowrap">ჯ</div>
<div class="abs" style="left:403px;top:633px;font-size:12px;line-height:16px;color:#555;white-space:nowrap">签名组件</div>
<div class="abs" style="left:490px;top:628px;width:100px;height:26px;border:1px solid #e6e6e6"></div>
<div class="abs" style="left:502px;top:632px;height:18px;line-height:18px;font-size:13px;font-weight:bold;color:#4888fe;white-space:nowrap">ω</div>
<div class="abs" style="left:518px;top:633px;font-size:12px;line-height:16px;color:#555;white-space:nowrap">Tag组件</div>
<div class="abs" style="left:378px;top:658px;width:100px;height:26px;border:1px solid #e6e6e6"></div>
<div class="abs" style="left:390px;top:662px;height:18px;line-height:18px;font-size:13px;font-weight:bold;color:#4888fe;white-space:nowrap">Æ</div>
<div class="abs" style="left:408px;top:663px;font-size:12px;line-height:16px;color:#555;white-space:nowrap">穿梭组件</div>
<div class="abs" style="left:490px;top:658px;width:100px;height:26px;border:1px solid #e6e6e6"></div>
<div class="abs" style="left:502px;top:662px;height:18px;line-height:18px;font-size:13px;font-weight:bold;color:#4888fe;white-space:nowrap">Ê</div>
<div class="abs" style="left:516px;top:663px;font-size:12px;line-height:16px;color:#555;white-space:nowrap">多图上传</div>
<div class="abs" style="left:378px;top:688px;width:100px;height:26px;border:1px solid #e6e6e6"></div>
<div class="abs" style="left:390px;top:692px;height:18px;line-height:18px;font-size:13px;font-weight:bold;color:#4888fe;white-space:nowrap">Đ</div>
<div class="abs" style="left:405px;top:693px;font-size:12px;line-height:16px;color:#555;white-space:nowrap">穿透多选</div>
<div class="abs" style="left:490px;top:688px;width:100px;height:26px;border:1px solid #e6e6e6"></div>
<div class="abs" style="left:502px;top:692px;height:18px;line-height:18px;font-size:13px;font-weight:bold;color:#4888fe;white-space:nowrap">⟋</div>
<div class="abs" style="left:520px;top:693px;font-size:12px;line-height:16px;color:#555;white-space:nowrap">颜色选择</div>
<div class="abs" style="left:378px;top:763px;width:100px;height:26px;border:1px solid #e6e6e6"></div>
<div class="abs" style="left:390px;top:767px;height:18px;line-height:18px;font-size:13px;font-weight:bold;color:#4888fe;white-space:nowrap">ρ</div>
<div class="abs" style="left:403px;top:768px;font-size:12px;line-height:16px;color:#555;white-space:nowrap">系统用户</div>
<div class="abs" style="left:490px;top:763px;width:100px;height:26px;border:1px solid #e6e6e6"></div>
<div class="abs" style="left:502px;top:767px;height:18px;line-height:18px;font-size:13px;font-weight:bold;color:#4888fe;white-space:nowrap">Θ</div>
<div class="abs" style="left:517px;top:768px;font-size:12px;line-height:16px;color:#555;white-space:nowrap">系统角色</div>
<div class="abs" style="left:378px;top:838px;width:100px;height:26px;border:1px solid #e6e6e6"></div>
<div class="abs" style="left:390px;top:842px;height:18px;line-height:18px;font-size:13px;font-weight:bold;color:#4888fe;white-space:nowrap"><span style="font-size:15px;font-weight:bold">§</span></div>
<div class="abs" style="left:406px;top:843px;font-size:12px;line-height:16px;color:#555;white-space:nowrap">分组线条</div>
<div class="abs" style="left:490px;top:838px;width:100px;height:26px;border:1px solid #e6e6e6"></div>
<div class="abs" style="left:502px;top:842px;height:18px;line-height:18px;font-size:13px;font-weight:bold;color:#4888fe;white-space:nowrap"><span style="font-size:15px;font-weight:bold">§</span></div>
<div class="abs" style="left:518px;top:843px;font-size:12px;line-height:16px;color:#555;white-space:nowrap">添加附表</div><div class="abs" style="left:608px;top:113px;width:935px;height:720px;border:1px dashed #8a8a8a"></div>
<div class="abs" style="left:609px;top:114px;width:467px;height:38px;border:1px dashed #8a8a8a"></div>
<div class="abs" style="left:1076px;top:114px;width:465px;height:38px;border:1px dashed #8a8a8a"></div>
<div class="abs" style="left:572px;width:120px;text-align:right;top:124px;font-size:12px;line-height:17px;color:#4888fe;font-weight:bold;white-space:nowrap">发票代码:</div>
<div class="abs inp" style="left:710px;top:118px;width:155px;height:30px;border:1px solid #dcdcdc;border-radius:2px;font-size:12px;line-height:28px;padding-left:10px;color:#777">请输入信息~</div>
<svg class="abs" style="left:873.0px;top:117.5px" width="12" height="12" viewBox="0 0 12 12"><circle cx="6.0" cy="6.0" r="5.3" fill="none" stroke="#ff0000" stroke-width="1.15"/><line x1="1.5000000000000002" y1="6.0" x2="10.5" y2="6.0" stroke="#ff0000" stroke-width="1.15"/></svg>
<svg class="abs" style="left:1524.0px;top:125.5px" width="12" height="12" viewBox="0 0 12 12"><circle cx="6.0" cy="6.0" r="5.3" fill="none" stroke="#4888fe" stroke-width="1.15"/><line x1="1.5000000000000002" y1="6.0" x2="10.5" y2="6.0" stroke="#4888fe" stroke-width="1.15"/></svg>
<div class="abs" style="left:609px;top:156px;width:467px;height:38px;border:1px dashed #8a8a8a"></div>
<div class="abs" style="left:1076px;top:156px;width:465px;height:38px;border:1px dashed #8a8a8a"></div>
<div class="abs" style="left:572px;width:120px;text-align:right;top:166px;font-size:12px;line-height:17px;color:#4888fe;font-weight:bold;white-space:nowrap">开票日期:</div>
<div class="abs inp" style="left:710px;top:160px;width:155px;height:30px;border:1px solid #dcdcdc;border-radius:2px;font-size:12px;line-height:28px;padding-left:10px;color:#777">请输入信息~</div>
<svg class="abs" style="left:873.0px;top:159.5px" width="12" height="12" viewBox="0 0 12 12"><circle cx="6.0" cy="6.0" r="5.3" fill="none" stroke="#ff0000" stroke-width="1.15"/><line x1="1.5000000000000002" y1="6.0" x2="10.5" y2="6.0" stroke="#ff0000" stroke-width="1.15"/></svg>
<svg class="abs" style="left:1524.0px;top:167.5px" width="12" height="12" viewBox="0 0 12 12"><circle cx="6.0" cy="6.0" r="5.3" fill="none" stroke="#4888fe" stroke-width="1.15"/><line x1="1.5000000000000002" y1="6.0" x2="10.5" y2="6.0" stroke="#4888fe" stroke-width="1.15"/></svg>
<div class="abs" style="left:609px;top:198px;width:467px;height:38px;border:1px dashed #8a8a8a"></div>
<div class="abs" style="left:1076px;top:198px;width:465px;height:38px;border:1px dashed #8a8a8a"></div>
<div class="abs" style="left:572px;width:120px;text-align:right;top:208px;font-size:12px;line-height:17px;color:#4888fe;font-weight:bold;white-space:nowrap">购买方名称:</div>
<div class="abs inp" style="left:710px;top:202px;width:155px;height:30px;border:1px solid #dcdcdc;border-radius:2px;font-size:12px;line-height:28px;padding-left:10px;color:#777">请输入信息~</div>
<svg class="abs" style="left:873.0px;top:201.5px" width="12" height="12" viewBox="0 0 12 12"><circle cx="6.0" cy="6.0" r="5.3" fill="none" stroke="#ff0000" stroke-width="1.15"/><line x1="1.5000000000000002" y1="6.0" x2="10.5" y2="6.0" stroke="#ff0000" stroke-width="1.15"/></svg>
<div class="abs" style="left:1039px;width:120px;text-align:right;top:208px;font-size:12px;line-height:17px;color:#4888fe;font-weight:bold;white-space:nowrap">销售方名称:</div>
<div class="abs inp" style="left:1176px;top:202px;width:155px;height:30px;border:1px solid #dcdcdc;border-radius:2px;font-size:12px;line-height:28px;padding-left:10px;color:#777">请输入信息~</div>
<svg class="abs" style="left:1339.0px;top:201.5px" width="12" height="12" viewBox="0 0 12 12"><circle cx="6.0" cy="6.0" r="5.3" fill="none" stroke="#ff0000" stroke-width="1.15"/><line x1="1.5000000000000002" y1="6.0" x2="10.5" y2="6.0" stroke="#ff0000" stroke-width="1.15"/></svg>
<svg class="abs" style="left:1524.0px;top:209.5px" width="12" height="12" viewBox="0 0 12 12"><circle cx="6.0" cy="6.0" r="5.3" fill="none" stroke="#4888fe" stroke-width="1.15"/><line x1="1.5000000000000002" y1="6.0" x2="10.5" y2="6.0" stroke="#4888fe" stroke-width="1.15"/></svg>
<div class="abs" style="left:609px;top:240px;width:467px;height:38px;border:1px dashed #8a8a8a"></div>
<div class="abs" style="left:1076px;top:240px;width:465px;height:38px;border:1px dashed #8a8a8a"></div>
<div class="abs" style="left:577px;width:120px;text-align:right;top:250px;font-size:12px;line-height:17px;color:#4888fe;font-weight:bold;white-space:nowrap">购买方识别号:</div>
<div class="abs inp" style="left:714px;top:244px;width:155px;height:30px;border:1px solid #dcdcdc;border-radius:2px;font-size:12px;line-height:28px;padding-left:10px;color:#777">请输入信息~</div>
<svg class="abs" style="left:877.0px;top:243.5px" width="12" height="12" viewBox="0 0 12 12"><circle cx="6.0" cy="6.0" r="5.3" fill="none" stroke="#ff0000" stroke-width="1.15"/><line x1="1.5000000000000002" y1="6.0" x2="10.5" y2="6.0" stroke="#ff0000" stroke-width="1.15"/></svg>
<div class="abs" style="left:1043px;width:120px;text-align:right;top:250px;font-size:12px;line-height:17px;color:#4888fe;font-weight:bold;white-space:nowrap">销售方识别号:</div>
<div class="abs inp" style="left:1180px;top:244px;width:155px;height:30px;border:1px solid #dcdcdc;border-radius:2px;font-size:12px;line-height:28px;padding-left:10px;color:#777">请输入信息~</div>
<svg class="abs" style="left:1343.0px;top:243.5px" width="12" height="12" viewBox="0 0 12 12"><circle cx="6.0" cy="6.0" r="5.3" fill="none" stroke="#ff0000" stroke-width="1.15"/><line x1="1.5000000000000002" y1="6.0" x2="10.5" y2="6.0" stroke="#ff0000" stroke-width="1.15"/></svg>
<svg class="abs" style="left:1524.0px;top:251.5px" width="12" height="12" viewBox="0 0 12 12"><circle cx="6.0" cy="6.0" r="5.3" fill="none" stroke="#4888fe" stroke-width="1.15"/><line x1="1.5000000000000002" y1="6.0" x2="10.5" y2="6.0" stroke="#4888fe" stroke-width="1.15"/></svg>
<div class="abs" style="left:609px;top:282px;width:467px;height:38px;border:1px dashed #8a8a8a"></div>
<div class="abs" style="left:1076px;top:282px;width:465px;height:38px;border:1px dashed #8a8a8a"></div>
<div class="abs" style="left:572px;width:120px;text-align:right;top:292px;font-size:12px;line-height:17px;color:#4888fe;font-weight:bold;white-space:nowrap">合 计:</div>
<div class="abs inp" style="left:710px;top:286px;width:155px;height:30px;border:1px solid #dcdcdc;border-radius:2px;font-size:12px;line-height:28px;padding-left:10px;color:#777">请输入信息~</div>
<svg class="abs" style="left:873.0px;top:285.5px" width="12" height="12" viewBox="0 0 12 12"><circle cx="6.0" cy="6.0" r="5.3" fill="none" stroke="#ff0000" stroke-width="1.15"/><line x1="1.5000000000000002" y1="6.0" x2="10.5" y2="6.0" stroke="#ff0000" stroke-width="1.15"/></svg>
<div class="abs" style="left:1039px;width:120px;text-align:right;top:292px;font-size:12px;line-height:17px;color:#4888fe;font-weight:bold;white-space:nowrap">总税额:</div>
<div class="abs inp" style="left:1176px;top:286px;width:155px;height:30px;border:1px solid #dcdcdc;border-radius:2px;font-size:12px;line-height:28px;padding-left:10px;color:#777">请输入信息~</div>
<svg class="abs" style="left:1339.0px;top:285.5px" width="12" height="12" viewBox="0 0 12 12"><circle cx="6.0" cy="6.0" r="5.3" fill="none" stroke="#ff0000" stroke-width="1.15"/><line x1="1.5000000000000002" y1="6.0" x2="10.5" y2="6.0" stroke="#ff0000" stroke-width="1.15"/></svg>
<svg class="abs" style="left:1524.0px;top:293.5px" width="12" height="12" viewBox="0 0 12 12"><circle cx="6.0" cy="6.0" r="5.3" fill="none" stroke="#4888fe" stroke-width="1.15"/><line x1="1.5000000000000002" y1="6.0" x2="10.5" y2="6.0" stroke="#4888fe" stroke-width="1.15"/></svg>
<div class="abs" style="left:609px;top:324px;width:932px;height:38px;border:1px dashed #8a8a8a"></div>
<div class="abs" style="left:572px;width:120px;text-align:right;top:334px;font-size:12px;line-height:17px;color:#4888fe;font-weight:bold">备注信息:</div>
<div class="abs" style="left:710px;top:328px;width:144px;height:30px;border:1px solid #dcdcdc;border-radius:2px"></div>
<svg class="abs" style="left:845px;top:349px" width="8" height="8" viewBox="0 0 8 8"><path d="M7 1 L1 7 M7 4 L4 7" stroke="#666" stroke-width="1"/></svg>
<svg class="abs" style="left:862.0px;top:327.5px" width="12" height="12" viewBox="0 0 12 12"><circle cx="6.0" cy="6.0" r="5.3" fill="none" stroke="#ff0000" stroke-width="1.15"/><line x1="1.5000000000000002" y1="6.0" x2="10.5" y2="6.0" stroke="#ff0000" stroke-width="1.15"/></svg>
<svg class="abs" style="left:1524.0px;top:335.5px" width="12" height="12" viewBox="0 0 12 12"><circle cx="6.0" cy="6.0" r="5.3" fill="none" stroke="#4888fe" stroke-width="1.15"/><line x1="1.5000000000000002" y1="6.0" x2="10.5" y2="6.0" stroke="#4888fe" stroke-width="1.15"/></svg>
<div class="abs" style="left:611px;top:378px;width:928px;height:110px;border:1px dashed #4888fe;border-top:none"></div>
<div class="abs" style="left:611px;top:378px;width:8px;height:1px;border-top:1px dashed #4888fe"></div>
<div class="abs" style="left:776px;top:378px;width:763px;height:1px;border-top:1px dashed #4888fe"></div>
<div class="abs" style="left:655px;top:370px;font-size:14px;line-height:18px;color:#4888fe;font-weight:bold">发票明细</div>
<svg class="abs" style="left:730.0px;top:373.5px" width="12" height="12" viewBox="0 0 12 12"><circle cx="6.0" cy="6.0" r="5.3" fill="none" stroke="#ff0000" stroke-width="1.15"/><line x1="1.5000000000000002" y1="6.0" x2="10.5" y2="6.0" stroke="#ff0000" stroke-width="1.15"/></svg>
<div class="abs" style="left:622px;top:396px;width:907px;height:40px;background:#f2f2f2;border:1px solid #e2e2e2"></div>
<div class="abs" style="left:622px;top:406px;width:113px;text-align:center;font-size:12px;line-height:18px;color:#666;font-weight:bold;white-space:nowrap">项目名称</div>
<div class="abs" style="left:622px;top:435px;width:113px;height:44px;border:1px dashed #8a8a8a"></div>
<div class="abs inp" style="left:626px;top:444px;width:101px;height:30px;border:1px solid #dcdcdc;border-radius:2px;font-size:12px;line-height:28px;padding-left:10px;color:#777;white-space:nowrap">请输入信息~</div>
<div class="abs" style="left:735px;top:396px;width:1px;height:40px;background:#e2e2e2"></div>
<div class="abs" style="left:735px;top:406px;width:113px;text-align:center;font-size:12px;line-height:18px;color:#666;font-weight:bold;white-space:nowrap">规格型号</div>
<div class="abs" style="left:735px;top:435px;width:113px;height:44px;border:1px dashed #8a8a8a"></div>
<div class="abs inp" style="left:740px;top:444px;width:101px;height:30px;border:1px solid #dcdcdc;border-radius:2px;font-size:12px;line-height:28px;padding-left:10px;color:#777;white-space:nowrap">请输入信息~</div>
<div class="abs" style="left:848px;top:396px;width:1px;height:40px;background:#e2e2e2"></div>
<div class="abs" style="left:848px;top:406px;width:113px;text-align:center;font-size:12px;line-height:18px;color:#666;font-weight:bold;white-space:nowrap">单 位</div>
<div class="abs" style="left:848px;top:435px;width:114px;height:44px;border:1px dashed #8a8a8a"></div>
<div class="abs inp" style="left:853px;top:444px;width:101px;height:30px;border:1px solid #dcdcdc;border-radius:2px;font-size:12px;line-height:28px;padding-left:10px;color:#777;white-space:nowrap">请输入信息~</div>
<div class="abs" style="left:962px;top:396px;width:1px;height:40px;background:#e2e2e2"></div>
<div class="abs" style="left:962px;top:406px;width:113px;text-align:center;font-size:12px;line-height:18px;color:#666;font-weight:bold;white-space:nowrap">数 量</div>
<div class="abs" style="left:962px;top:435px;width:113px;height:44px;border:1px dashed #8a8a8a"></div>
<div class="abs inp" style="left:966px;top:444px;width:101px;height:30px;border:1px solid #dcdcdc;border-radius:2px;font-size:12px;line-height:28px;padding-left:10px;color:#777;white-space:nowrap">请输入信息~</div>
<div class="abs" style="left:1075px;top:396px;width:1px;height:40px;background:#e2e2e2"></div>
<div class="abs" style="left:1075px;top:406px;width:113px;text-align:center;font-size:12px;line-height:18px;color:#666;font-weight:bold;white-space:nowrap">单 价</div>
<div class="abs" style="left:1075px;top:435px;width:113px;height:44px;border:1px dashed #8a8a8a"></div>
<div class="abs inp" style="left:1080px;top:444px;width:101px;height:30px;border:1px solid #dcdcdc;border-radius:2px;font-size:12px;line-height:28px;padding-left:10px;color:#777;white-space:nowrap">请输入信息~</div>
<div class="abs" style="left:1188px;top:396px;width:1px;height:40px;background:#e2e2e2"></div>
<div class="abs" style="left:1188px;top:406px;width:113px;text-align:center;font-size:12px;line-height:18px;color:#666;font-weight:bold;white-space:nowrap">金 额</div>
<div class="abs" style="left:1188px;top:435px;width:114px;height:44px;border:1px dashed #8a8a8a"></div>
<div class="abs inp" style="left:1193px;top:444px;width:101px;height:30px;border:1px solid #dcdcdc;border-radius:2px;font-size:12px;line-height:28px;padding-left:10px;color:#777;white-space:nowrap">请输入信息~</div>
<div class="abs" style="left:1302px;top:396px;width:1px;height:40px;background:#e2e2e2"></div>
<div class="abs" style="left:1302px;top:406px;width:113px;text-align:center;font-size:12px;line-height:18px;color:#666;font-weight:bold;white-space:nowrap">税率/征收率</div>
<div class="abs" style="left:1302px;top:435px;width:113px;height:44px;border:1px dashed #8a8a8a"></div>
<div class="abs inp" style="left:1306px;top:444px;width:101px;height:30px;border:1px solid #dcdcdc;border-radius:2px;font-size:12px;line-height:28px;padding-left:10px;color:#777;white-space:nowrap">请输入信息~</div>
<div class="abs" style="left:1415px;top:396px;width:1px;height:40px;background:#e2e2e2"></div>
<div class="abs" style="left:1415px;top:406px;width:113px;text-align:center;font-size:12px;line-height:18px;color:#666;font-weight:bold;white-space:nowrap">税 额</div>
<div class="abs" style="left:1415px;top:435px;width:113px;height:44px;border:1px dashed #8a8a8a"></div>
<div class="abs inp" style="left:1420px;top:444px;width:101px;height:30px;border:1px solid #dcdcdc;border-radius:2px;font-size:12px;line-height:28px;padding-left:10px;color:#777;white-space:nowrap">请输入信息~</div><div class="abs" style="left:1543px;top:112px;width:361px;height:727px;border:1px solid #e6e6e6;border-top:none;border-right:none"></div>
<div class="abs" style="left:1549px;top:124px;font-size:12px;line-height:17px;color:#666">字段设置</div>
<div class="abs" style="left:1549px;top:147px;width:348px;height:1px;background:#e6e6e6"></div>
<div class="abs" style="left:1513px;width:120px;text-align:right;top:162px;font-size:12px;line-height:17px;color:#4888fe;font-weight:bold;white-space:nowrap">唯一标识</div>
<div class="abs" style="left:1644px;top:156px;width:153px;height:30px;border:1px solid #d9d9d9;border-radius:2px;font-size:12px;line-height:28px;padding-left:10px;color:#111;white-space:nowrap;overflow:hidden">textarea_20260222154338</div>
<div class="abs" style="left:1803px;top:158px;font-size:15px;line-height:18px;color:#ff1a1a">S</div>
<div class="abs" style="left:1513px;width:120px;text-align:right;top:200px;font-size:12px;line-height:17px;color:#4888fe;font-weight:bold;white-space:nowrap">字段标题</div>
<div class="abs" style="left:1644px;top:194px;width:155px;height:30px;border:1px solid #d9d9d9;border-radius:2px;font-size:12px;line-height:28px;padding-left:10px;color:#111;white-space:nowrap;overflow:hidden">备注信息</div>
<div class="abs" style="left:1513px;width:120px;text-align:right;top:238px;font-size:12px;line-height:17px;color:#4888fe;font-weight:bold;white-space:nowrap">字段名称</div>
<div class="abs" style="left:1644px;top:232px;width:155px;height:30px;border:1px solid #d9d9d9;border-radius:2px;font-size:12px;line-height:28px;padding-left:10px;color:#111;white-space:nowrap;overflow:hidden">bzxx</div>
<div class="abs" style="left:1513px;width:120px;text-align:right;top:276px;font-size:12px;line-height:17px;color:#4888fe;font-weight:bold;white-space:nowrap">字段类型</div>
<div class="abs" style="left:1644px;top:270px;width:69px;height:30px;border:1px solid #d9d9d9;border-radius:2px;font-size:12px;line-height:28px;padding-left:4px;color:#111;white-space:nowrap">longtext</div>
<svg class="abs" style="left:1698px;top:281px" width="10" height="7" viewBox="0 0 10 7"><path d="M1 1 L5 5.5 L9 1" fill="none" stroke="#111" stroke-width="2"/></svg>
<div class="abs" style="left:1513px;width:120px;text-align:right;top:314px;font-size:12px;line-height:17px;color:#4888fe;font-weight:bold;white-space:nowrap">字段长度</div>
<div class="abs" style="left:1644px;top:308px;width:80px;height:30px;border:1px solid #d9d9d9;border-radius:2px;font-size:12px;line-height:28px;padding-left:10px;color:#111;white-space:nowrap;overflow:hidden">0</div>
<div class="abs" style="left:1513px;width:120px;text-align:right;top:352px;font-size:12px;line-height:17px;color:#4888fe;font-weight:bold;white-space:nowrap">组件宽度</div>
<div class="abs" style="left:1644px;top:346px;width:80px;height:30px;border:1px solid #d9d9d9;border-radius:2px;font-size:12px;line-height:28px;padding-left:10px;color:#111;white-space:nowrap;overflow:hidden">120</div>
<div class="abs" style="left:1513px;width:120px;text-align:right;top:390px;font-size:12px;line-height:17px;color:#4888fe;font-weight:bold;white-space:nowrap">字段只读</div>
<div class="abs" style="left:1644px;top:384px;width:34px;height:30px;border:1px solid #d9d9d9;border-radius:2px;font-size:12px;line-height:28px;padding-left:4px;color:#111;white-space:nowrap">否</div>
<svg class="abs" style="left:1663px;top:395px" width="10" height="7" viewBox="0 0 10 7"><path d="M1 1 L5 5.5 L9 1" fill="none" stroke="#111" stroke-width="2"/></svg>
<div class="abs" style="left:1513px;width:120px;text-align:right;top:428px;font-size:12px;line-height:17px;color:#4888fe;font-weight:bold;white-space:nowrap">字段必填</div>
<div class="abs" style="left:1644px;top:422px;width:34px;height:30px;border:1px solid #d9d9d9;border-radius:2px;font-size:12px;line-height:28px;padding-left:4px;color:#111;white-space:nowrap">否</div>
<svg class="abs" style="left:1663px;top:433px" width="10" height="7" viewBox="0 0 10 7"><path d="M1 1 L5 5.5 L9 1" fill="none" stroke="#111" stroke-width="2"/></svg>
<div class="abs" style="left:1513px;width:120px;text-align:right;top:466px;font-size:12px;line-height:17px;color:#4888fe;font-weight:bold;white-space:nowrap">字段记忆</div>
<div class="abs" style="left:1644px;top:460px;width:34px;height:30px;border:1px solid #d9d9d9;border-radius:2px;font-size:12px;line-height:28px;padding-left:4px;color:#111;white-space:nowrap">否</div>
<svg class="abs" style="left:1663px;top:471px" width="10" height="7" viewBox="0 0 10 7"><path d="M1 1 L5 5.5 L9 1" fill="none" stroke="#111" stroke-width="2"/></svg>
<div class="abs" style="left:1513px;width:120px;text-align:right;top:504px;font-size:12px;line-height:17px;color:#4888fe;font-weight:bold;white-space:nowrap">内容唯一</div>
<div class="abs" style="left:1644px;top:498px;width:34px;height:30px;border:1px solid #d9d9d9;border-radius:2px;font-size:12px;line-height:28px;padding-left:4px;color:#111;white-space:nowrap">否</div>
<svg class="abs" style="left:1663px;top:509px" width="10" height="7" viewBox="0 0 10 7"><path d="M1 1 L5 5.5 L9 1" fill="none" stroke="#111" stroke-width="2"/></svg>
<div class="abs" style="left:1513px;width:120px;text-align:right;top:542px;font-size:12px;line-height:17px;color:#4888fe;font-weight:bold;white-space:nowrap">lable隐藏</div>
<div class="abs" style="left:1644px;top:536px;width:34px;height:30px;border:1px solid #d9d9d9;border-radius:2px;font-size:12px;line-height:28px;padding-left:4px;color:#111;white-space:nowrap">否</div>
<svg class="abs" style="left:1663px;top:547px" width="10" height="7" viewBox="0 0 10 7"><path d="M1 1 L5 5.5 L9 1" fill="none" stroke="#111" stroke-width="2"/></svg>
<div class="abs" style="left:1513px;width:120px;text-align:right;top:580px;font-size:12px;line-height:17px;color:#4888fe;font-weight:bold;white-space:nowrap">帮助信息</div>
<div class="abs" style="left:1644px;top:574px;width:155px;height:30px;border:1px solid #d9d9d9;border-radius:2px;font-size:12px;line-height:28px;padding-left:10px;color:#111;white-space:nowrap;overflow:hidden"></div>
<div class="abs" style="left:1513px;width:120px;text-align:right;top:618px;font-size:12px;line-height:17px;color:#4888fe;font-weight:bold;white-space:nowrap">默认内容</div>
<div class="abs" style="left:1644px;top:612px;width:157px;height:30px;border:1px solid #d9d9d9;border-radius:2px;font-size:12px;line-height:28px;padding-left:10px;color:#111;white-space:nowrap;overflow:hidden"></div>
<div class="abs" style="left:1807px;top:618px;font-size:14px;line-height:18px;color:#ff1a1a">配</div>
<div class="abs" style="left:1513px;width:120px;text-align:right;top:656px;font-size:12px;line-height:17px;color:#4888fe;font-weight:bold;white-space:nowrap">规则引擎</div>
<div class="abs" style="left:1644px;top:650px;width:157px;height:30px;border:1px solid #d9d9d9;border-radius:2px;font-size:12px;line-height:28px;padding-left:10px;color:#111;white-space:nowrap;overflow:hidden"></div>
<div class="abs" style="left:1807px;top:656px;font-size:14px;line-height:18px;color:#ff1a1a">配</div>
<div class="abs" style="left:1563px;top:686px;width:48px;height:26px;background:#4888fe;border-radius:3px;color:#fff;font-size:13px;line-height:26px;text-align:center;font-weight:bold">保存</div><div class="abs" style="left:1795px;top:855px;width:125px;height:56px;box-shadow:0 0 90px 10px rgba(0,0,0,0.10)"></div>
<div class="abs" style="left:1797px;top:851px;width:30px;height:8px;background:#6aaa3a;border-radius:3px 0 0 0"></div>
<div class="abs" style="left:1827px;top:851px;width:77px;height:8px;background:#1e1e1e"></div>
<div class="abs" style="left:1793px;top:857px;width:130px;height:58px;background:#fff;border-radius:8px;box-shadow:0 0 5px rgba(0,0,0,0.10)"></div>
<div class="abs" style="left:1808px;top:865px;width:38px;height:38px;border-radius:50%;background:#363b48"></div>
<svg class="abs" style="left:1815px;top:869px" width="24" height="32" viewBox="0 0 24 32"><g fill="none" stroke="#19c2a8" stroke-width="1.1"><circle cx="12" cy="10.5" r="6.3"/><path d="M6.5 8 C7 4 10 3 11 4 C12 2.5 15 3 15.5 5 C17 5 18 6.5 17.5 8"/><path d="M9.5 12.5 C11 14.2 13 14.2 14.5 12.5"/><path d="M5.7 9 C3.8 9 3.8 12.5 5.7 12.5 M18.3 9 C20.2 9 20.2 12.5 18.3 12.5"/><path d="M5.5 31 V26 C5.5 22 8.5 19.5 12 19.5 C15.5 19.5 18.5 22 18.5 26 V31Z"/><path d="M10.5 21 L12 23 L13.5 21 M12 23 V26"/></g></svg>
<div class="abs" style="left:1856px;top:874px;font-size:16px;line-height:20px;color:#333">流之云</div>
<div class="abs" style="left:1850px;top:892px;font-size:16px;line-height:20px;color:#1e90c8;font-style:italic;white-space:nowrap">cojz8.com</div><div class="abs" style="left:0;top:0;width:1920px;height:911px;pointer-events:none;overflow:hidden">
<div class="abs wm" style="left:40px;top:54px">ld:12026-03-02gadmin</div>
<div class="abs wm" style="left:372px;top:54px">ld:12026-03-02gadmin</div>
<div class="abs wm" style="left:704px;top:54px">ld:12026-03-02gadmin</div>
<div class="abs wm" style="left:1036px;top:54px">ld:12026-03-02gadmin</div>
<div class="abs wm" style="left:1368px;top:54px">ld:12026-03-02gadmin</div>
<div class="abs wm" style="left:1700px;top:54px">ld:12026-03-02gadmin</div>
<div class="abs wm" style="left:40px;top:184px">ld:12026-03-02gadmin</div>
<div class="abs wm" style="left:372px;top:184px">ld:12026-03-02gadmin</div>
<div class="abs wm" style="left:704px;top:184px">ld:12026-03-02gadmin</div>
<div class="abs wm" style="left:1036px;top:184px">ld:12026-03-02gadmin</div>
<div class="abs wm" style="left:1368px;top:184px">ld:12026-03-02gadmin</div>
<div class="abs wm" style="left:1700px;top:184px">ld:12026-03-02gadmin</div>
<div class="abs wm" style="left:40px;top:314px">ld:12026-03-02gadmin</div>
<div class="abs wm" style="left:372px;top:314px">ld:12026-03-02gadmin</div>
<div class="abs wm" style="left:704px;top:314px">ld:12026-03-02gadmin</div>
<div class="abs wm" style="left:1036px;top:314px">ld:12026-03-02gadmin</div>
<div class="abs wm" style="left:1368px;top:314px">ld:12026-03-02gadmin</div>
<div class="abs wm" style="left:1700px;top:314px">ld:12026-03-02gadmin</div>
<div class="abs wm" style="left:40px;top:444px">ld:12026-03-02gadmin</div>
<div class="abs wm" style="left:372px;top:444px">ld:12026-03-02gadmin</div>
<div class="abs wm" style="left:704px;top:444px">ld:12026-03-02gadmin</div>
<div class="abs wm" style="left:1036px;top:444px">ld:12026-03-02gadmin</div>
<div class="abs wm" style="left:1368px;top:444px">ld:12026-03-02gadmin</div>
<div class="abs wm" style="left:1700px;top:444px">ld:12026-03-02gadmin</div>
<div class="abs wm" style="left:40px;top:574px">ld:12026-03-02gadmin</div>
<div class="abs wm" style="left:372px;top:574px">ld:12026-03-02gadmin</div>
<div class="abs wm" style="left:704px;top:574px">ld:12026-03-02gadmin</div>
<div class="abs wm" style="left:1036px;top:574px">ld:12026-03-02gadmin</div>
<div class="abs wm" style="left:1368px;top:574px">ld:12026-03-02gadmin</div>
<div class="abs wm" style="left:1700px;top:574px">ld:12026-03-02gadmin</div>
</div></body></html>
